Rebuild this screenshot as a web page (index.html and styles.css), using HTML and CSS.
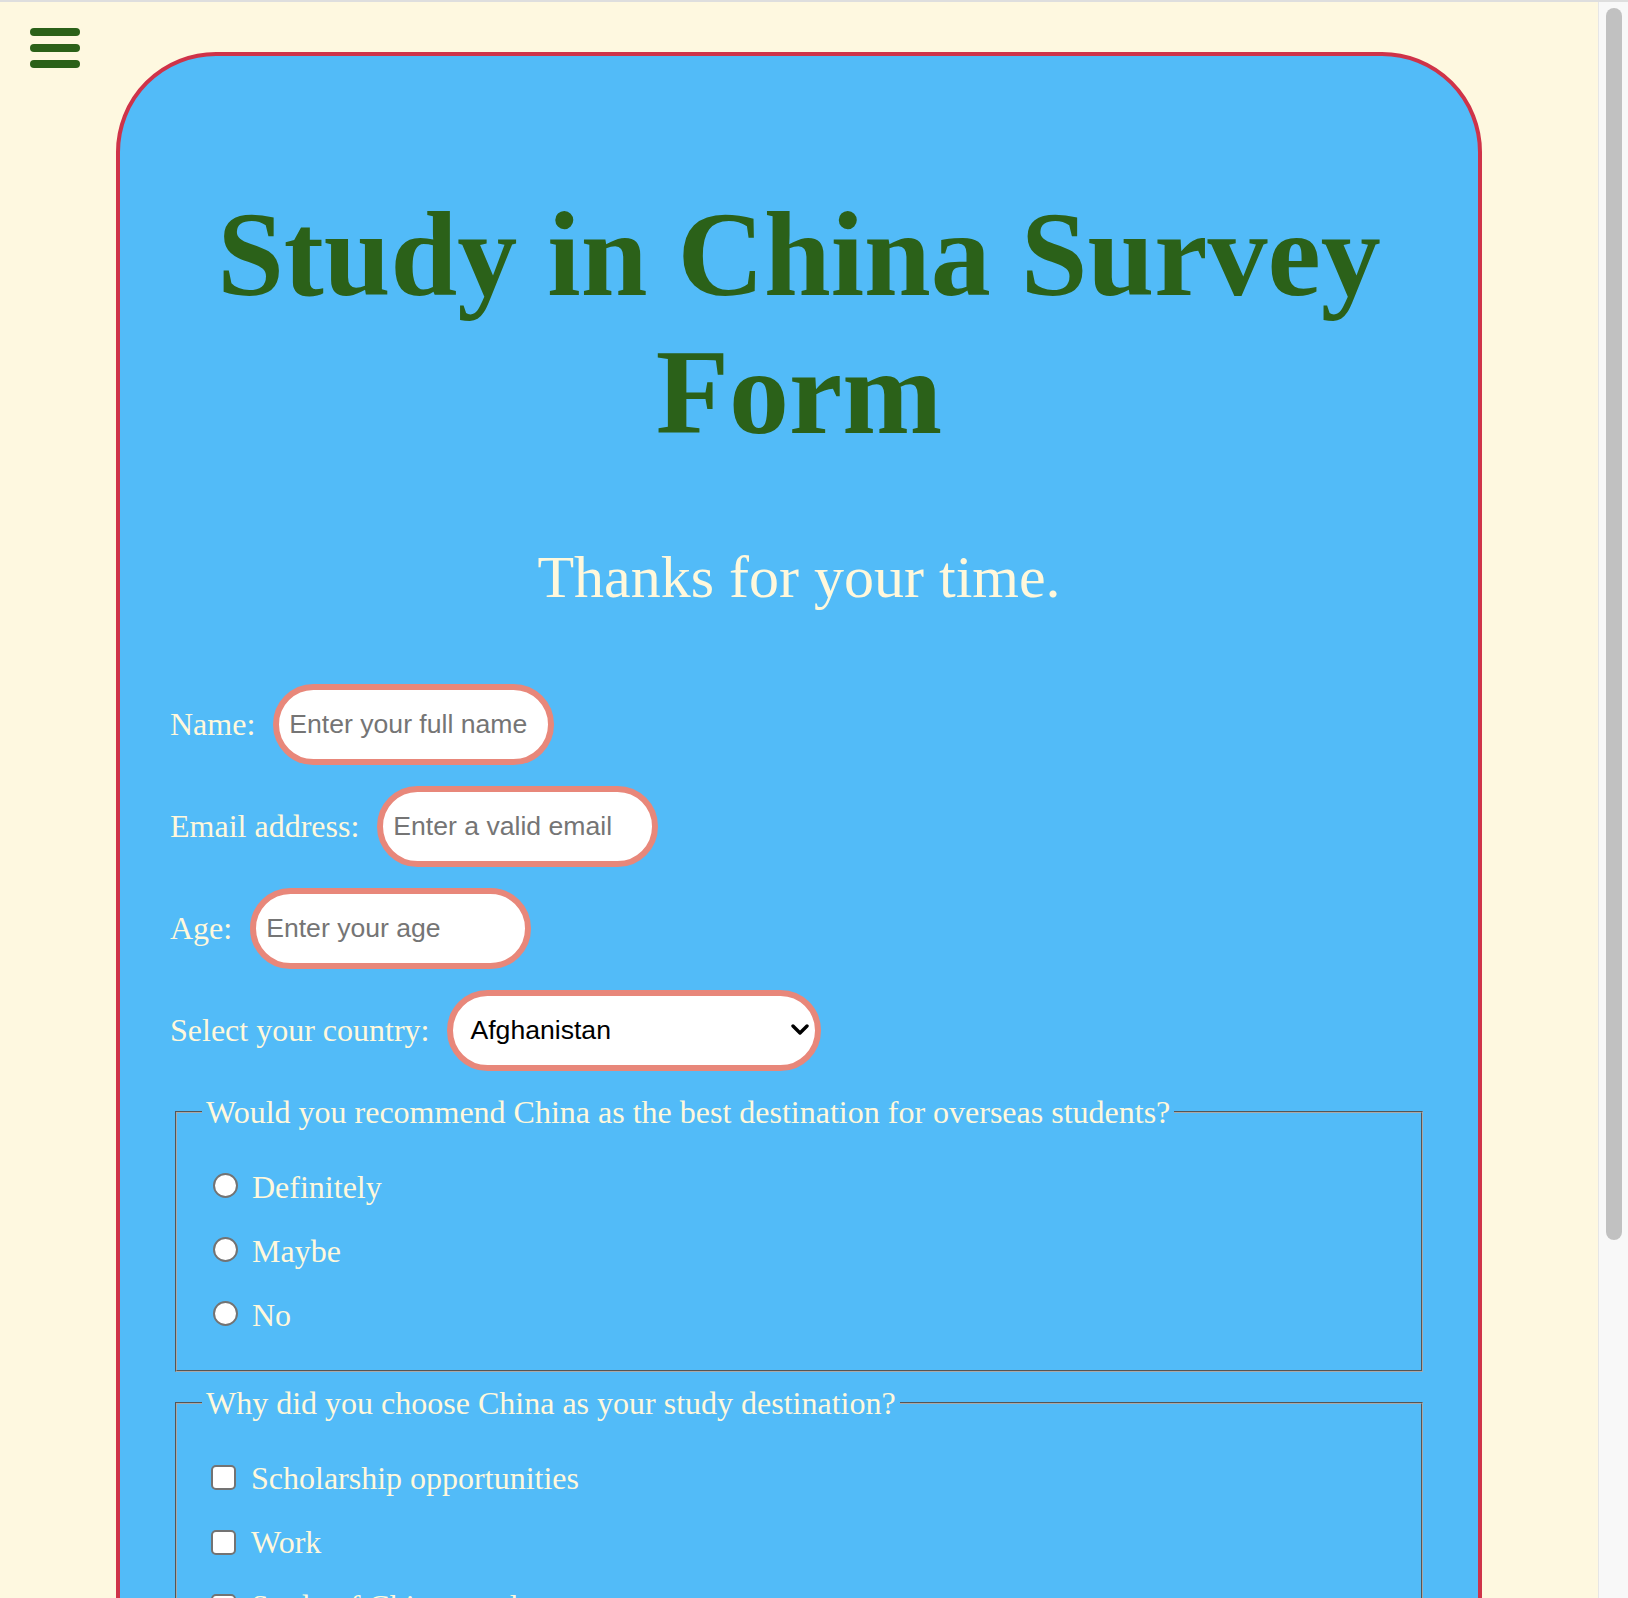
FILE: index.html
```html
<!DOCTYPE html>
<html lang="en">
<head>
<meta charset="utf-8">
<title>Study in China Survey Form</title>
<link rel="stylesheet" href="styles.css">
</head>
<body>
<div class="topline"></div>
<div class="scrollbar" aria-hidden="true"><div class="scrollbar-thumb"></div></div>
<button class="menu-toggle" type="button" aria-label="Menu">
  <span class="bar"></span><span class="bar"></span><span class="bar"></span>
</button>
<main class="card">
  <h1 class="title">Study in China Survey Form</h1>
  <p class="subtitle">Thanks for your time.</p>
  <form class="survey">
    <div class="row">
      <label class="label" for="name">Name:</label>
      <input class="field" id="name" type="text" placeholder="Enter your full name">
    </div>
    <div class="row">
      <label class="label" for="email">Email address:</label>
      <input class="field" id="email" type="email" placeholder="Enter a valid email">
    </div>
    <div class="row">
      <label class="label" for="age">Age:</label>
      <input class="field" id="age" type="number" placeholder="Enter your age">
    </div>
    <div class="row row-last">
      <label class="label" for="country">Select your country:</label>
      <div class="select-wrap">
        <select class="field select" id="country">
          <option>Afghanistan</option>
          <option>Albania</option>
          <option>Algeria</option>
        </select>
        <svg class="chevron" width="18" height="12" viewBox="0 0 18 12" aria-hidden="true"><path d="M2 2 L9 9 L16 2" fill="none" stroke="#000" stroke-width="3.4" stroke-linecap="round" stroke-linejoin="round"/></svg>
      </div>
    </div>
    <fieldset class="group">
      <legend class="legend">Would you recommend China as the best destination for overseas students?</legend>
      <div class="options">
        <label class="option"><input class="radio" type="radio" name="rec"><span>Definitely</span></label>
        <label class="option"><input class="radio" type="radio" name="rec"><span>Maybe</span></label>
        <label class="option"><input class="radio" type="radio" name="rec"><span>No</span></label>
      </div>
    </fieldset>
    <fieldset class="group">
      <legend class="legend">Why did you choose China as your study destination?</legend>
      <div class="options">
        <label class="option option-check"><input class="check" type="checkbox"><span>Scholarship opportunities</span></label>
        <label class="option option-check"><input class="check" type="checkbox"><span>Work</span></label>
        <label class="option option-check"><input class="check" type="checkbox"><span>Study of Chinese culture</span></label>
      </div>
    </fieldset>
    <div class="comments">
      <label class="label" for="comments">Any comments or suggestions?</label>
      <textarea class="textarea" id="comments" placeholder="Enter your comment here..."></textarea>
    </div>
    <button class="submit" type="submit">Submit</button>
  </form>
</main>
</body>
</html>
```
FILE: styles.css
```css
html {
  background: #fef8e0;
}

body {
  margin: 0;
  padding: 52px 30px 64px 0;
  background: #fef8e0;
  font-family: "Liberation Serif", "Times New Roman", serif;
  color: #fff8dc;
}

.topline {
  position: fixed;
  top: 0;
  left: 0;
  right: 0;
  height: 2px;
  background: #dedede;
  z-index: 10;
}

.scrollbar {
  position: fixed;
  top: 0;
  right: 0;
  bottom: 0;
  width: 29px;
  background: #f8f8f8;
  border-left: 1px solid #e6e6e6;
  z-index: 5;
}

.scrollbar-thumb {
  position: absolute;
  top: 8px;
  left: 7px;
  width: 16px;
  height: 1232px;
  border-radius: 8px;
  background: #c1c1c1;
}

.menu-toggle {
  position: fixed;
  top: 28px;
  left: 30px;
  display: flex;
  flex-direction: column;
  gap: 8px;
  padding: 0;
  border: 0;
  background: transparent;
  cursor: pointer;
}

.bar {
  display: block;
  width: 50px;
  height: 8px;
  border-radius: 4px;
  background: #2b6119;
}

.card {
  display: block;
  box-sizing: border-box;
  width: 1366px;
  margin: 0 auto;
  padding: 50px 50px 50px;
  background: #52bbf8;
  border: 4px solid #cf3349;
  border-radius: 100px;
}

.title {
  margin: 80.4px 0;
  font-size: 120px;
  font-weight: bold;
  line-height: normal;
  text-align: center;
  color: #2b6119;
}

.subtitle {
  margin: 0 0 72px;
  font-size: 60px;
  line-height: normal;
  text-align: center;
  color: #fff8dc;
}

.survey {
  display: block;
}

.row {
  display: flex;
  align-items: center;
  height: 81px;
  margin-bottom: 21px;
}

.row-last {
  margin-bottom: 23px;
}

.label {
  font-size: 32px;
  line-height: normal;
  color: #fff8dc;
  margin-right: 18px;
}

.field {
  box-sizing: border-box;
  width: 281px;
  height: 81px;
  padding: 0 10px;
  border: 6px solid #e8877a;
  border-radius: 41px;
  background: #fff;
  font-family: "Liberation Sans", Arial, sans-serif;
  font-size: 26.6px;
  color: #000;
  outline: none;
}

.field::placeholder {
  color: #757575;
}

.field[type="number"]::-webkit-inner-spin-button,
.field[type="number"]::-webkit-outer-spin-button {
  -webkit-appearance: none;
  margin: 0;
}

.select-wrap {
  position: relative;
  display: flex;
}

.select {
  width: 374px;
  padding: 0 40px 0 17px;
  -webkit-appearance: none;
  appearance: none;
}

.chevron {
  position: absolute;
  right: 12px;
  top: 34px;
  pointer-events: none;
}

.group {
  margin: 0 5px 13px;
  padding: 38px 25px 35.7px;
  border: 2px groove #a9a9a9;
}

.legend {
  padding: 0 4px;
  font-size: 32px;
  line-height: normal;
  color: #fff8dc;
}

.options {
  display: flex;
  flex-direction: column;
  gap: 27.2px;
}

.option {
  display: flex;
  align-items: center;
  padding-left: 11px;
  font-size: 32px;
  line-height: normal;
  color: #fff8dc;
}

.option-check {
  padding-left: 9px;
}

.radio {
  -webkit-appearance: none;
  appearance: none;
  box-sizing: border-box;
  width: 25px;
  height: 25px;
  margin: 0 14px 4px 0;
  border: 2px solid #737373;
  border-radius: 50%;
  background: #fff;
  flex: none;
}

.check {
  -webkit-appearance: none;
  appearance: none;
  box-sizing: border-box;
  width: 25px;
  height: 25px;
  margin: 0 15px 1px 0;
  border: 2px solid #737373;
  border-radius: 5px;
  background: #fff;
  flex: none;
}

.comments {
  display: flex;
  flex-direction: column;
  align-items: flex-start;
  gap: 10px;
  margin-top: 21px;
}

.textarea {
  box-sizing: border-box;
  width: 100%;
  height: 120px;
  padding: 12px 16px;
  border: 6px solid #e8877a;
  border-radius: 24px;
  background: #fff;
  font-family: "Liberation Sans", Arial, sans-serif;
  font-size: 26.6px;
  resize: none;
}

.textarea::placeholder {
  color: #757575;
}

.submit {
  display: block;
  margin-top: 21px;
  height: 64px;
  padding: 0 40px;
  border: 4px solid #cf3349;
  border-radius: 32px;
  background: #2b6119;
  color: #fff8dc;
  font-family: "Liberation Serif", "Times New Roman", serif;
  font-size: 32px;
}
```
